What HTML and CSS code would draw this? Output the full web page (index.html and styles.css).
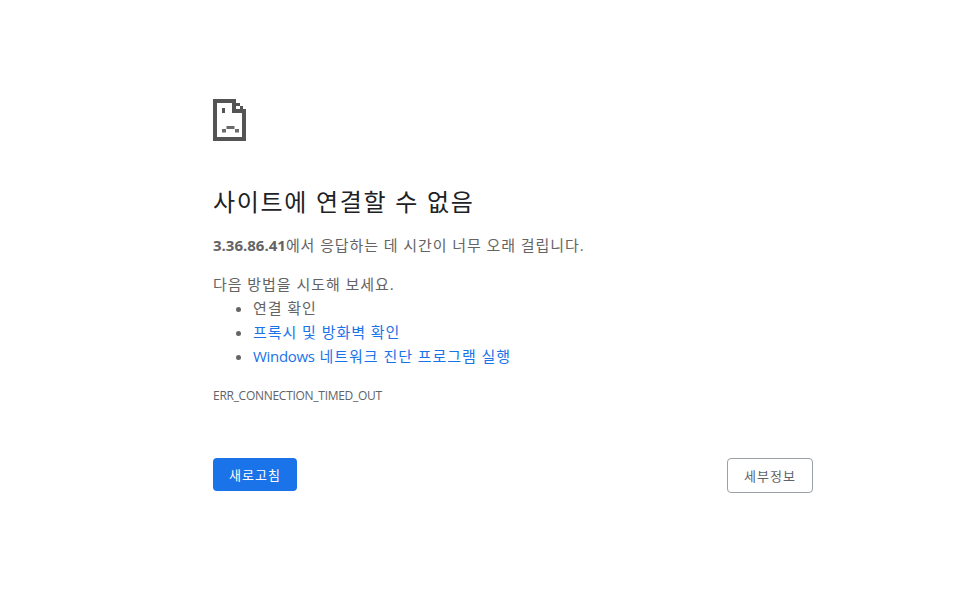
FILE: index.html
```html
<!DOCTYPE html>
<html lang="ko">
<head>
<meta charset="utf-8">
<title>사이트에 연결할 수 없음</title>
<link rel="stylesheet" href="styles.css">
</head>
<body>
<main class="page">
  <svg class="icon" width="33" height="42" viewBox="0 0 33 42" fill="#545454">
    <path d="M0 0H23V4H4V38H29V10H33V42H0Z"/>
    <path d="M19 4H23V10H33V14H19Z"/>
    <path d="M23 4H27V7H23ZM27 7H30V10H27Z"/>
    <path d="M9 9H12V14H9Z"/>
    <path d="M9 30H13V33.5H9ZM13.5 27H21.5V30H13.5ZM22 30H26V33.5H22Z" fill="#6a6a6a"/>
  </svg>
  <h1 class="title">사이트에 연결할 수 없음</h1>
  <p class="summary"><strong class="latin">3.36.86.41</strong>에서 응답하는 데 시간이 너무 오래 걸립니다.</p>
  <p class="try">다음 방법을 시도해 보세요.</p>
  <ul class="tips">
    <li>연결 확인</li>
    <li><a href="#">프록시 및 방화벽 확인</a></li>
    <li><a href="#"><span class="latin">Windows</span> 네트워크 진단 프로그램 실행</a></li>
  </ul>
  <div class="code">ERR_CONNECTION_TIMED_OUT</div>
  <div class="actions">
    <button class="btn primary">새로고침</button>
    <button class="btn secondary">세부정보</button>
  </div>
</main>
</body>
</html>
```
FILE: styles.css
```css
html, body {
  margin: 0;
  padding: 0;
  background: #fff;
}
body {
  font-family: "Open Sans", "Noto Sans CJK KR", sans-serif;
  font-size: 15px;
  color: #646464;
}
.page {
  width: 600px;
  margin-left: 213px;
  padding-top: 99px;
  display: flex;
  flex-direction: column;
}
.icon {
  display: block;
}
.title {
  margin: 45px 0 0;
  font-size: 24px;
  line-height: 32px;
  font-weight: 400;
  letter-spacing: 1.7px;
  color: #202124;
}
.summary {
  margin: 15px 0 0;
  line-height: 24px;
  letter-spacing: 0.92px;
}
.latin {
  letter-spacing: 0;
}
.try {
  margin: 15px 0 0;
  line-height: 24px;
  letter-spacing: 0.95px;
}
.tips {
  margin: 0;
  padding: 0 0 0 40px;
  line-height: 24px;
  letter-spacing: 0.95px;
}
.tips .latin {
  letter-spacing: -0.3px;
}
.tips a {
  color: #1a73e8;
  text-decoration: none;
}
.code {
  margin-top: 20px;
  font-size: 12px;
  line-height: 16px;
  letter-spacing: -0.28px;
  color: #5f6368;
}
.actions {
  margin-top: 54px;
  display: flex;
  justify-content: space-between;
  align-items: flex-start;
}
.btn {
  font-family: "Open Sans", "Noto Sans CJK KR", sans-serif;
  font-size: 13px;
  letter-spacing: 1px;
  border-radius: 4px;
  box-sizing: border-box;
  padding: 0;
}
.primary {
  width: 84px;
  height: 33px;
  background: #1a73e8;
  border: 0;
  color: #fff;
  font-weight: 400;
}
.secondary {
  width: 86px;
  height: 35px;
  background: #fff;
  border: 1px solid #9aa0a6;
  color: #5f6368;
}
```
